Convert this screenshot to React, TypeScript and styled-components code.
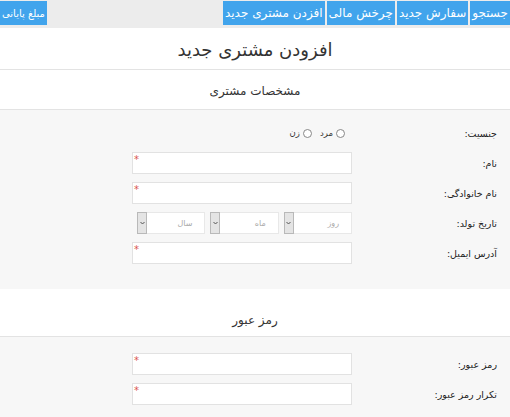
import React from 'react'
import styled, { createGlobalStyle } from 'styled-components'

const Global = createGlobalStyle`
  html, body { margin: 0; padding: 0; background: #f7f7f7; }
  body { font-family: Tahoma, 'DejaVu Sans', sans-serif; color: #333; }
  * { box-sizing: border-box; }
`

const Page = styled.div`
  direction: rtl;
  width: 510px;
  min-height: 417px;
  background: #f7f7f7;
`

const TopBar = styled.div`
  height: 28px;
  background: #ececec;
  display: flex;
  align-items: flex-start;
  padding-top: 1px;
  gap: 2px;
`

const NavButton = styled.div<{ $small?: boolean }>`
  height: 24px;
  padding: 0 2px;
  background: #41a4ec;
  color: #fff;
  font-size: ${({ $small }) => ($small ? '10px' : '12px')};
  display: flex;
  align-items: center;
  white-space: nowrap;
`

const Spacer = styled.div`
  flex: 1;
`

const Heading = styled.div<{ $size: number; $height: number }>`
  height: ${({ $height }) => $height}px;
  background: #fff;
  border-bottom: 1px solid #e3e3e3;
  display: flex;
  align-items: center;
  justify-content: center;
  padding-top: 2px;
  font-size: ${({ $size }) => $size}px;
  color: #333;
`

const SectionTitle = styled.div`
  height: 48px;
  background: #fff;
  border-bottom: 1px solid #e3e3e3;
  display: flex;
  align-items: flex-end;
  justify-content: center;
  padding-bottom: 9px;
  font-size: 12px;
  color: #333;
`

const FormBody = styled.div<{ $top: number; $bottom: number }>`
  background: #f7f7f7;
  padding: ${({ $top, $bottom }) => `${$top}px 13px ${$bottom}px 0`};
  display: flex;
  flex-direction: column;
  gap: 8px;
`

const Row = styled.div`
  display: grid;
  grid-template-columns: 145px 220px;
  align-items: center;
  min-height: 22px;
`

const Label = styled.div`
  font-size: 9.5px;
  color: #222;
  text-align: right;
`

const FieldWrap = styled.div`
  position: relative;
  height: 22px;
`

const Input = styled.input`
  width: 100%;
  height: 22px;
  border: 1px solid #e2e2e2;
  background: #fff;
  outline: none;
  padding: 0 4px;
  font: inherit;
`

const Star = styled.span`
  position: absolute;
  left: 2px;
  top: 3px;
  color: #d9534f;
  font-size: 10px;
  line-height: 10px;
`

const RadioGroup = styled.div`
  display: flex;
  align-items: center;
  gap: 8px;
  padding-right: 7px;
  font-size: 8.5px;
`

const RadioItem = styled.label`
  display: flex;
  align-items: center;
  gap: 3px;
`

const RadioCircle = styled.span`
  width: 9px;
  height: 9px;
  border: 1px solid #888;
  border-radius: 50%;
  background: #fff;
`

const SelectRow = styled.div`
  display: flex;
  gap: 5px;
  padding-left: 5px;
`

const SelectBox = styled.div`
  width: 70px;
  height: 22px;
  border: 1px solid #e8e8e8;
  background: #fff;
  display: flex;
  align-items: center;
  justify-content: space-between;
  font-size: 8px;
  color: #aaa;
  padding-right: 12px;
`

const SelectArrow = styled.span`
  width: 10px;
  height: 22px;
  margin: -1px 0 -1px -1px;
  background: #e4e4e4;
  border: 1px solid #b9b9b9;
  display: flex;
  align-items: center;
  justify-content: center;
`

const Chevron = () => (
  <svg width="5" height="4" viewBox="0 0 5 4">
    <path d="M0.5 1 L2.5 3 L4.5 1" fill="none" stroke="#555" strokeWidth="1" />
  </svg>
)

const TextField = () => (
  <FieldWrap>
    <Input />
    <Star>*</Star>
  </FieldWrap>
)

const Select = ({ placeholder }: { placeholder: string }) => (
  <SelectBox>
    <span>{placeholder}</span>
    <SelectArrow>
      <Chevron />
    </SelectArrow>
  </SelectBox>
)

export default function App() {
  return (
    <Page>
      <Global />
      <TopBar>
        <NavButton>جستجو</NavButton>
        <NavButton>سفارش جدید</NavButton>
        <NavButton>چرخش مالی</NavButton>
        <NavButton>افزدن مشتری جدید</NavButton>
        <Spacer />
        <NavButton $small>مبلغ پایانی</NavButton>
      </TopBar>
      <Heading $size={18} $height={42}>افزودن مشتری جدید</Heading>
      <Heading $size={12} $height={40}>مشخصات مشتری</Heading>
      <FormBody $top={12} $bottom={25}>
        <Row>
          <Label>جنسیت:</Label>
          <RadioGroup>
            <RadioItem>
              <RadioCircle />
              مرد
            </RadioItem>
            <RadioItem>
              <RadioCircle />
              زن
            </RadioItem>
          </RadioGroup>
        </Row>
        <Row>
          <Label>نام:</Label>
          <TextField />
        </Row>
        <Row>
          <Label>نام خانوادگی:</Label>
          <TextField />
        </Row>
        <Row>
          <Label>تاریخ تولد:</Label>
          <SelectRow>
            <Select placeholder="روز" />
            <Select placeholder="ماه" />
            <Select placeholder="سال" />
          </SelectRow>
        </Row>
        <Row>
          <Label>آدرس ایمیل:</Label>
          <TextField />
        </Row>
      </FormBody>
      <SectionTitle>رمز عبور</SectionTitle>
      <FormBody $top={16} $bottom={12}>
        <Row>
          <Label>رمز عبور:</Label>
          <TextField />
        </Row>
        <Row>
          <Label>تکرار رمز عبور:</Label>
          <TextField />
        </Row>
      </FormBody>
    </Page>
  )
}
